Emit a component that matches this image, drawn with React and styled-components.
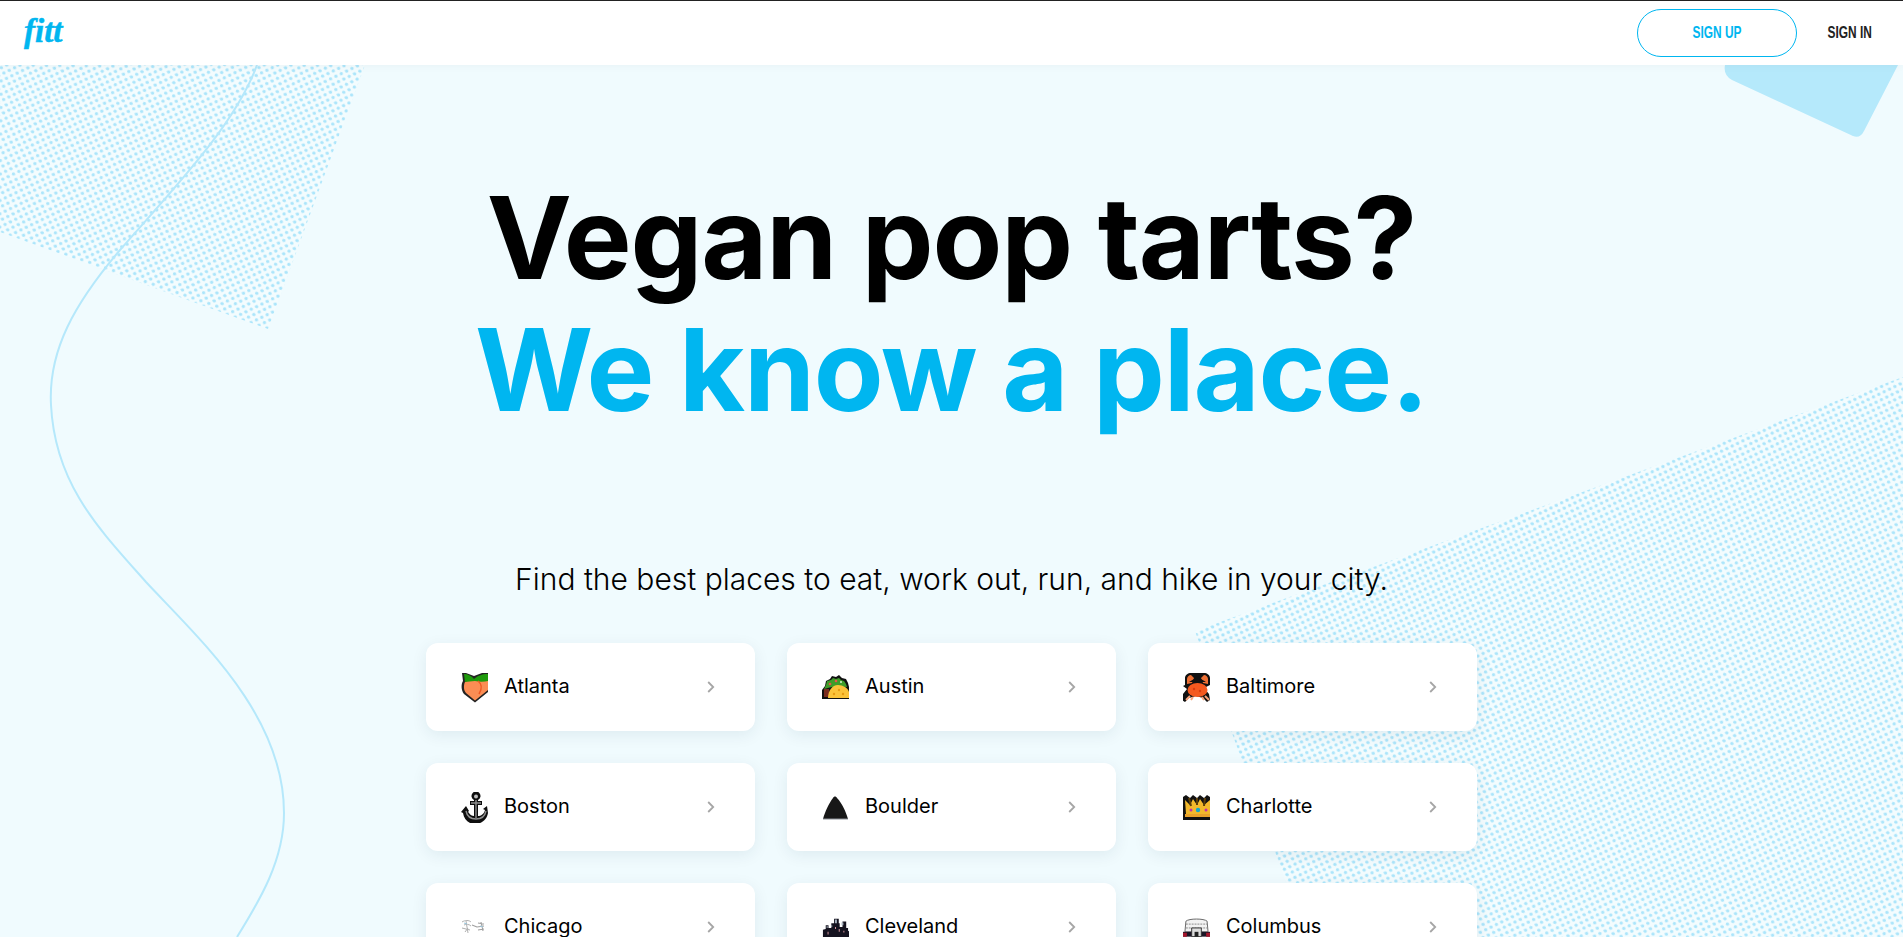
import React from 'react'
import styled, { createGlobalStyle } from 'styled-components'

const GlobalStyle = createGlobalStyle`
  html, body {
    margin: 0;
    padding: 0;
    background: #f0fbfe;
    font-family: "Inter", "Liberation Sans", sans-serif;
  }
  * {
    box-sizing: border-box;
  }
`

const Peach = () => (
  <svg width="27" height="31" viewBox="0 0 27 31">
    <path d="M1 1h4l8 3 8-3h6v19L14 30.500 3 22C0 18 0 12 2 9z" fill="#222" />
    <path d="M4 10C2 14 3 19 5 21l9 7.500L27 18V9C20 7 9 7 4 10z" fill="#fb8d54" />
    <path d="M3 2c4 0 8 2 10 5 3-3 8-5 14-5v7c-4 1-9 1-13 0-4 0-7 1-10 1z" fill="#1f9a0c" />
    <path d="M17 9c4 3 4 8 1 13" stroke="#ef5a24" strokeWidth="1.500" fill="none" />
  </svg>
)

const Anchor = () => (
  <svg width="27" height="31" viewBox="0 0 27 31">
    <path d="M0 20l5-6 3 5c-1 0-1 1 0 2 1 2 3 3 5 3V13H9V9h4V8a4.500 4.500 0 1 1 4 0v1h4v4h-4v11c3 0 6-2 7-6l-2-1 4-3 1 7c-1 6-6 11-13 11S3 27 2 21z" fill="#0e0e0e" />
    <circle cx="15" cy="4.500" r="2" fill="#bdbdbd" />
    <path d="M15 8v18M10 11h10M5 19c1 5 5 8 10 8s9-3 10-8" fill="none" stroke="#8e8e8e" strokeWidth="1.400" />
  </svg>
)

const Scribble = () => (
  <svg width="27" height="16" viewBox="0 0 27 16">
    <path d="M1 3c3-2 7-2 9 0M3 6c2-1 5-1 7 1M5 2l2 12M7 9l-3 4M1 9l8 2" stroke="#b0b0b0" strokeWidth="1" fill="none" />
    <path d="M11 6l5 2M17 4l6 1M16 8l7-1M17 11l6-1M20 3l2 9" stroke="#a0a0a0" strokeWidth="1.100" fill="none" />
    <path d="M3 4l3 1M19 7l3 1" stroke="#9cc8de" strokeWidth="1" />
  </svg>
)

const Taco = () => (
  <svg width="27" height="25" viewBox="0 0 27 25">
    <path d="M0 24v-9l3-4 1-5 4-2 2-3 4 1 3-2 3 3 4 1 2 4 1 4v12z" fill="#111" />
    <path d="M2 14l2-4 1-4 4-1 2-2 3 1 3-1 2 2 3 1 2 3 1 3c-6-1-15-1-23 2z" fill="#3f9c2a" />
    <circle cx="8" cy="9" r="1.300" fill="#e8544a" />
    <circle cx="14" cy="6" r="1.300" fill="#e8544a" />
    <circle cx="19" cy="7" r="1" fill="#d9efcf" />
    <path d="M2 14h5v8H2z" fill="#7a2c1e" />
    <path d="M6 23c0-7 4-13 10-13 5 0 10 3 11 7v6z" fill="#fbc33a" />
    <circle cx="17" cy="15" r="1.200" fill="#e79a14" />
    <circle cx="12" cy="19" r="1.200" fill="#e79a14" />
    <circle cx="21" cy="19" r="1.200" fill="#e79a14" />
  </svg>
)

const Mountain = () => (
  <svg width="27" height="26" viewBox="0 0 27 26">
    <path d="M1 25C3 18 7 9 11 4c1-2 3-2 4 0 5 5 9 14 11 21z" fill="#171717" />
    <path d="M1 25h25" stroke="#8a8f96" strokeWidth="1" />
  </svg>
)

const Skyline = () => (
  <svg width="29" height="21" viewBox="0 0 29 21">
    <path d="M1 21v-8l3-1V8h3v3h3V6h3V1h5v5h1v4h3V4h4v7h2v3l2 1v6z" fill="#15131f" />
    <path d="M14 2h2v4h-2zM21 5h2v3h-2zM5 9h1v2H5zM10 8h1v2h-1z" fill="#a9b4c0" />
    <path d="M6 15h1v3H6zM14 10h1v2h-1zM23 14h1v2h-1zM18 12h1v3h-1z" fill="#e3a0a8" />
  </svg>
)

const Crab = () => (
  <svg width="27" height="31" viewBox="0 0 27 31">
    <path d="M2 13V6c0-3 3-5 6-5h13c3 0 6 2 6 5v7l-6 3 5 6 1 6-3 2-4-4-7-2-7 2-4 4-3-2 1-6 4-5-4-3z" fill="#111" />
    <path d="M4 12V7c0-2 2-4 4-4l3 3-2 5zM25 12V7c0-2-2-4-4-4l-3 3 2 5z" fill="#ee7034" />
    <ellipse cx="14.500" cy="18" rx="10" ry="7" fill="#f4591f" />
    <path d="M7 24l-4 4M22 24l4 4M10 25l-2 3M19 25l2 3" stroke="#f8a47c" strokeWidth="2" />
    <path d="M11 4h7v3l5 3H6l5-3z" fill="#111" />
    <circle cx="11" cy="17" r="1.200" fill="#d93d10" />
    <circle cx="17" cy="19" r="1.200" fill="#d93d10" />
  </svg>
)

const Crown = () => (
  <svg width="27" height="26" viewBox="0 0 27 26">
    <path d="M0 26V3l3-2 4 3 3-3 4 3 3-3 4 3 3-3 3 2v23z" fill="#111" />
    <path d="M3 20L2 6l5 5 3-6 4 6 3-6 4 6 6-5v14z" fill="#f2b82c" />
    <path d="M6 4l2 8M14 4v7M22 4l-1 8" stroke="#5a3d08" strokeWidth="2" />
    <path d="M2 20h25v3H2z" fill="#e9a12a" />
    <circle cx="8" cy="16" r="1.500" fill="#c52fa8" />
    <circle cx="15" cy="16" r="2.200" fill="#14a6c8" />
    <circle cx="23" cy="16" r="1.500" fill="#c52fa8" />
  </svg>
)

const Stadium = () => (
  <svg width="28" height="20" viewBox="0 0 28 20">
    <path d="M3 4c3-3 19-3 22 0l1 11H2z" fill="#f2f2f2" stroke="#666" strokeWidth="1" />
    <path d="M3 7h22M3 11h22" stroke="#888" strokeWidth="1" strokeDasharray="2 1" />
    <path d="M0 15h28v5H0z" fill="#1b1626" />
    <path d="M0 16h4v4H0zM24 16h4v4h-4z" fill="#a3162c" />
    <path d="M9 20v-9h10v9z" fill="#ddd" stroke="#333" strokeWidth="1" />
    <path d="M12 20v-5h4v5z" fill="#222" />
  </svg>
)

const cities = [
  { name: 'Atlanta', icon: <Peach /> },
  { name: 'Austin', icon: <Taco /> },
  { name: 'Baltimore', icon: <Crab /> },
  { name: 'Boston', icon: <Anchor /> },
  { name: 'Boulder', icon: <Mountain /> },
  { name: 'Charlotte', icon: <Crown /> },
  { name: 'Chicago', icon: <Scribble /> },
  { name: 'Cleveland', icon: <Skyline /> },
  { name: 'Columbus', icon: <Stadium /> },
]

const Backdrop = () => (
  <BackdropSvg viewBox="0 0 1903 872" preserveAspectRatio="none">
    <defs>
      <pattern id="halftone" width="8.400" height="8.400" patternUnits="userSpaceOnUse" patternTransform="rotate(19)">
        <rect width="8.400" height="8.400" fill="#f3fcfe" />
        <circle cx="2.100" cy="2.100" r="1.700" fill="#abe5fb" />
        <circle cx="6.300" cy="6.300" r="1.700" fill="#abe5fb" />
      </pattern>
    </defs>
    <polygon points="0,0 365,0 268,264 0,167" fill="url(#halftone)" />
    <polygon points="1903,312 1195,566 1306,872 1903,872" fill="url(#halftone)" />
    <path d="M1725 0 Q1723 10 1732 15 L1853 71 Q1860 74 1864 66 L1898 0 Z" fill="#b5e9fb" />
    <path
      d="M257 0 C235 60 175 122 120 185 C75 238 48 285 51 340 C55 420 100 465 146 517 C200 575 284 650 284 748 C284 795 260 835 237 872"
      fill="none"
      stroke="#b5e8fb"
      strokeWidth="2"
    />
  </BackdropSvg>
)

export default function App() {
  return (
    <>
      <GlobalStyle />
      <Page>
        <Header>
          <Logo>fitt</Logo>
          <Nav>
            <SignUp><NarrowLabel>SIGN UP</NarrowLabel></SignUp>
            <SignIn><NarrowLabel>SIGN IN</NarrowLabel></SignIn>
          </Nav>
        </Header>
        <Hero>
          <Backdrop />
          <Headline>
            Vegan pop tarts?
            <Accent>We know a place.</Accent>
          </Headline>
          <Tagline>Find the best places to eat, work out, run, and hike in your city.</Tagline>
          <CityGrid>
            {cities.map(city => (
              <CityCard key={city.name}>
                <CityIcon>{city.icon}</CityIcon>
                <CityName>{city.name}</CityName>
                <svg width="8" height="12" viewBox="0 0 8 12">
                  <path d="M1.200 1l5 5-5 5" fill="none" stroke="#a6a6a6" strokeWidth="1.800" />
                </svg>
              </CityCard>
            ))}
          </CityGrid>
        </Hero>
      </Page>
    </>
  )
}

const Page = styled.div`
  height: 937px;
  overflow: hidden;
  display: flex;
  flex-direction: column;
  background: #f0fbfe;
`

const Header = styled.header`
  position: relative;
  z-index: 2;
  height: 65px;
  flex: none;
  display: flex;
  align-items: center;
  justify-content: space-between;
  padding: 0 32px 0 24px;
  background: #fff;
  border-top: 1px solid #222;
  box-shadow: 0 2px 8px rgba(0, 0, 0, 0.03);
`

const Logo = styled.div`
  font-family: "Liberation Serif", serif;
  font-style: italic;
  font-weight: 700;
  font-size: 33px;
  line-height: 1;
  color: #00b6f0;
  -webkit-text-stroke: 0.5px #00b6f0;
  margin-bottom: 4px;
`

const Nav = styled.nav`
  display: flex;
  align-items: center;
  gap: 32px;
`

const NarrowLabel = styled.span`
  display: inline-block;
  font-family: "Liberation Sans", sans-serif;
  font-weight: 700;
  font-size: 17px;
  white-space: nowrap;
  transform: scaleX(0.7);
`

const SignUp = styled.a`
  width: 160px;
  height: 48px;
  display: flex;
  align-items: center;
  justify-content: center;
  border: 1.5px solid #00b6f0;
  border-radius: 24px;
  color: #00b6f0;
`

const SignIn = styled.a`
  width: 42px;
  display: flex;
  justify-content: center;
  color: #222;
`

const Hero = styled.main`
  position: relative;
  flex: 1;
  min-height: 0;
  display: flex;
  flex-direction: column;
  align-items: center;
  padding-top: 107px;
`

const BackdropSvg = styled.svg`
  position: absolute;
  inset: 0;
  width: 100%;
  height: 100%;
`

const Headline = styled.h1`
  position: relative;
  margin: 0;
  font-size: 114px;
  line-height: 132px;
  font-weight: 700;
  letter-spacing: -1.2px;
  color: #000;
  text-align: center;
`

const Accent = styled.span`
  display: block;
  color: #00b6f0;
`

const Tagline = styled.p`
  position: relative;
  margin: 123px 0 0;
  font-size: 30px;
  font-weight: 300;
  line-height: 40px;
  color: #000;
`

const CityGrid = styled.div`
  position: relative;
  flex: none;
  display: grid;
  grid-template-columns: repeat(3, 329px);
  grid-auto-rows: 88px;
  gap: 32px;
  margin-top: 44px;
`

const CityCard = styled.a`
  display: flex;
  align-items: center;
  padding: 0 40px 0 35px;
  background: #fff;
  border-radius: 12px;
  box-shadow: 0 4px 16px rgba(0, 50, 80, 0.08);
`

const CityIcon = styled.span`
  width: 27px;
  margin-right: 16px;
  display: flex;
  align-items: center;
  justify-content: center;
`

const CityName = styled.span`
  flex: 1;
  margin-bottom: 2px;
  font-size: 20px;
  color: #000;
`
